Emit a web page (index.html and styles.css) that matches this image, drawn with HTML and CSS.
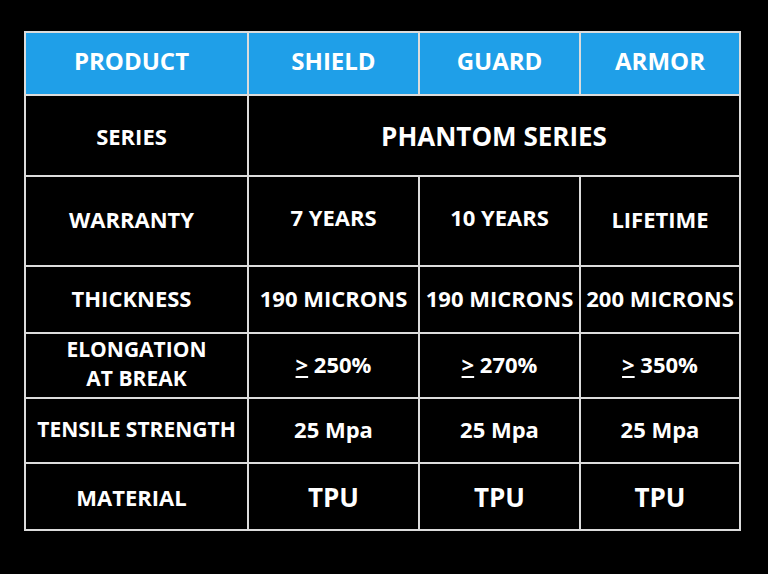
FILE: index.html
```html
<!DOCTYPE html>
<html>
<head>
<meta charset="utf-8">
<link rel="stylesheet" href="styles.css">
</head>
<body>
<table class="spec">
  <colgroup>
    <col class="c-label">
    <col class="c-shield">
    <col class="c-guard">
    <col class="c-armor">
  </colgroup>
  <thead>
    <tr class="r-head">
      <th class="first">PRODUCT</th>
      <th>SHIELD</th>
      <th>GUARD</th>
      <th>ARMOR</th>
    </tr>
  </thead>
  <tbody>
    <tr class="r-series">
      <td class="label">SERIES</td>
      <td class="big" colspan="3">PHANTOM SERIES</td>
    </tr>
    <tr class="r-warranty lift">
      <td class="label">WARRANTY</td>
      <td class="val up">7 YEARS</td>
      <td class="val up">10 YEARS</td>
      <td class="val">LIFETIME</td>
    </tr>
    <tr class="r-thick lift">
      <td class="label">THICKNESS</td>
      <td class="val">190 MICRONS</td>
      <td class="val">190 MICRONS</td>
      <td class="val">200 MICRONS</td>
    </tr>
    <tr class="r-elong lift">
      <td class="label two">ELONGATION<br>AT BREAK</td>
      <td class="val"><span class="ge">&gt;</span> 250%</td>
      <td class="val"><span class="ge">&gt;</span> 270%</td>
      <td class="val"><span class="ge">&gt;</span> 350%</td>
    </tr>
    <tr class="r-tensile lift">
      <td class="label tight">TENSILE STRENGTH</td>
      <td class="val">25 Mpa</td>
      <td class="val">25 Mpa</td>
      <td class="val">25 Mpa</td>
    </tr>
    <tr class="r-material">
      <td class="label">MATERIAL</td>
      <td class="tpu">TPU</td>
      <td class="tpu">TPU</td>
      <td class="tpu">TPU</td>
    </tr>
  </tbody>
</table>
</body>
</html>
```

FILE: styles.css
```css
html, body {
  margin: 0;
  padding: 0;
  background: #000;
}
body {
  width: 768px;
  height: 574px;
  overflow: hidden;
  padding: 31px 0 0 24px;
  box-sizing: border-box;
  font-family: "Open Sans", "DejaVu Sans", sans-serif;
  color: #fff;
}
.spec {
  border-collapse: collapse;
  table-layout: fixed;
  width: 715px;
}
.c-label { width: 223px; }
.c-shield { width: 171px; }
.c-guard { width: 161px; }
.c-armor { width: 160px; }
.spec th, .spec td {
  border: 2px solid #dcdcdc;
  text-align: center;
  vertical-align: middle;
  padding: 0;
  font-weight: 700;
  white-space: nowrap;
}
.spec th {
  background: #1f9fe8;
  font-size: 24px;
  padding-bottom: 6px;
}
.spec th.first {
  padding-right: 10px;
}
.r-head { height: 63px; }
.r-series { height: 81px; }
.r-warranty { height: 90px; }
.r-thick { height: 67px; }
.r-elong { height: 65px; }
.r-tensile { height: 65px; }
.r-material { height: 67px; }
.lift td {
  padding-bottom: 4px;
}
.label {
  font-size: 22px;
}
.spec td.label {
  padding-right: 10px;
}
.spec td.label.tight,
.spec td.label.two {
  font-size: 21px;
  padding-right: 0;
}
.label.two {
  line-height: 29px;
}
.val {
  font-size: 22px;
}
.lift td.val.up {
  padding-bottom: 8px;
}
.big {
  font-size: 26px;
}
.tpu {
  font-size: 26px;
}
.ge {
  text-decoration: underline;
  text-decoration-thickness: 2px;
  text-underline-offset: 3px;
}
```
